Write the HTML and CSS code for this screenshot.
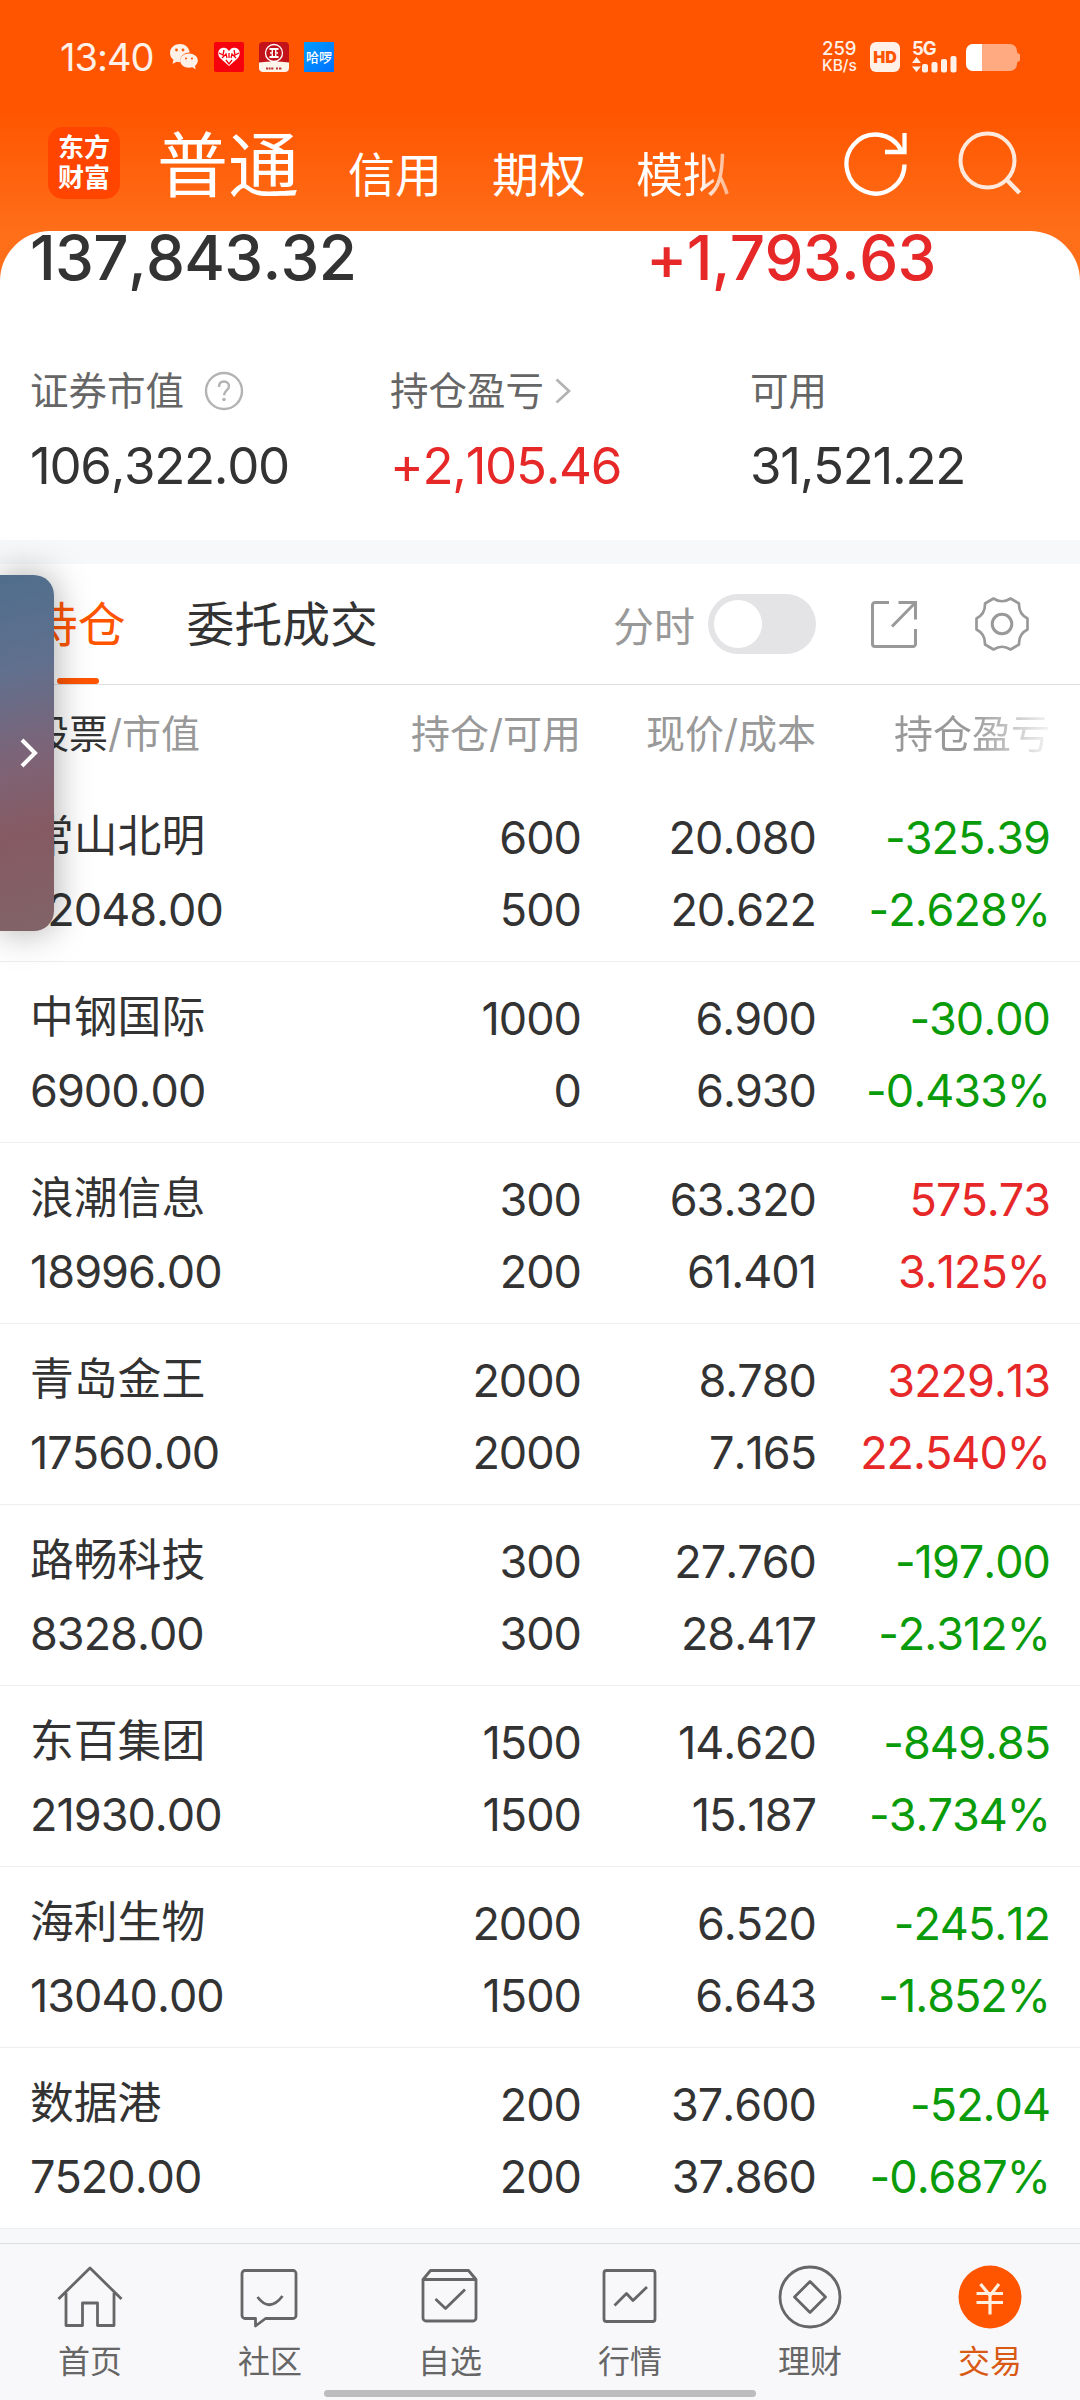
FILE: index.html
```
<!DOCTYPE html>
<html lang="zh-CN">
<head>
  <meta charset="UTF-8" />
  <meta name="viewport" content="width=device-width, initial-scale=1.0" />
  <title>交易 - 持仓</title>
  <link rel="stylesheet" href="styles.css">
</head>
<body>

  <header class="top">
    <div class="status-bar">
      <span class="time">13:40</span>
      <svg class="wechat" width="30" height="28" viewBox="0 0 30 28">
        <path d="M11 1C5 1 1 5 1 10c0 3 1.300 5 3.500 6.800L3.500 21l4-2.200c1.200.3 2.500.4 3.800.4-.8-6 3.200-9.500 9.400-9.800C20 4.500 16 1 11 1z" fill="#fff0e8"/>
        <path d="M20 10.500c-5 0-8.800 3-8.800 7.100s3.800 7.200 8.800 7.200c1.100 0 2.200-.2 3.200-.5l3.500 2-.8-3.300c1.900-1.400 2.900-3.200 2.900-5.400 0-4.100-3.900-7.100-8.800-7.100z" fill="#fff0e8"/>
        <g fill="#ff5a00"><circle cx="7.500" cy="7" r="1.400"/><circle cx="14" cy="7" r="1.400"/><circle cx="17" cy="15.500" r="1.100"/><circle cx="23" cy="15.500" r="1.100"/></g>
      </svg>
      <svg class="app" width="30" height="30" viewBox="0 0 30 30">
        <rect width="30" height="30" rx="2" fill="#f5000c"/>
        <path d="M15 24L6 16c-3-4-2-9 2-10 3-1 5 0 7 3 2-3 4-4 7-3 4 1 5 6 2 10z" fill="#fff"/>
        <path d="M5 11l4 2 1-5M8 16l4-4 1 4M25 11l-4 2-1-5M22 16l-4-4-1 4M15 11v5M12 18l3 4 3-4" fill="none" stroke="#f5000c" stroke-width="1.300"/>
      </svg>
      <svg class="app" width="30" height="30" viewBox="0 0 30 30">
        <rect width="30" height="30" rx="4" fill="#c3121a"/>
        <path d="M0 20.500q15-2 30 0V26a4 4 0 0 1-4 4H4a4 4 0 0 1-4-4z" fill="#fff4ea"/>
        <g fill="none" stroke="#fff"><circle cx="15" cy="11" r="8.500" stroke-width="1.300"/><path d="M10.500 7h9M10.500 15h9" stroke-width="1.800"/><path d="M13.300 7.500v3.500h-2.300M16.700 7.500v3.500h2.300M13.300 15v-3M16.700 15v-3" stroke-width="1.400"/></g>
        <path d="M7 26.500h8M17 26.500h2M20 26.500h3" stroke="#b33" stroke-width="2" stroke-dasharray="2 .6"/>
      </svg>
      <span class="hello">哈啰</span>
      <div class="status-right">
        <div class="speed"><b>259</b><span>KB/s</span></div>
        <span class="hd">HD</span>
        <svg class="signal" width="46" height="34" viewBox="0 -3 46 34">
          <text x="0" y="13" class="g5">5G</text>
          <g fill="#fff0e8"><path d="M0 21l4.500-6L9 21zM0 24.500h9L4.500 30z"/><rect x="10" y="22" width="6" height="8.500" rx="2"/><rect x="19.500" y="20" width="6" height="10.500" rx="2"/><rect x="29" y="17" width="6" height="13.500" rx="2"/><rect x="38.500" y="14" width="6" height="16.500" rx="2"/></g>
        </svg>
        <svg class="battery" width="55" height="27" viewBox="0 0 55 27">
          <path d="M7 0h37a7 7 0 0 1 7 7v1.500l3 2v6l-3 2V20a7 7 0 0 1-7 7H7a7 7 0 0 1-7-7V7a7 7 0 0 1 7-7z" fill="#ffaa80"/>
          <path d="M7 0h9v27H7a7 7 0 0 1-7-7V7a7 7 0 0 1 7-7z" fill="#fff"/>
        </svg>
      </div>
    </div>

    <nav class="account-nav">
      <div class="logo"><span>东方</span><span>财富</span></div>
      <a class="account active">普通</a>
      <a class="account">信用</a>
      <a class="account">期权</a>
      <a class="account fade">模拟</a>
      <svg class="refresh" width="64" height="66" viewBox="0 0 64 66">
        <path d="M60.500 33.500A29 29.500 0 1 1 57 19M60.500 2v19H41" fill="none" stroke="#fff" stroke-width="4.300"/>
      </svg>
      <svg class="search" width="64" height="66" viewBox="0 0 64 66">
        <circle cx="29.500" cy="29.500" r="27" fill="none" stroke="#ffe9dc" stroke-width="4"/>
        <path d="M48.500 48.500L61.500 62" stroke="#ffe9dc" stroke-width="4.500"/>
      </svg>
    </nav>
  </header>

  <main class="sheet">
    <section class="summary">
      <div class="totals">
        <span class="total">137,843.32</span>
        <span class="total up">+1,793.63</span>
      </div>
      <div class="stats">
        <div class="stat">
          <div class="label"><span>证券市值</span>
            <svg class="help" width="40" height="40" viewBox="0 0 40 40">
              <circle cx="20" cy="20" r="18" fill="none" stroke="#b3b3b3" stroke-width="2.400"/>
              <path d="M15 16c0-3.600 2-5.500 5-5.500s5 1.900 5 4.700c0 4-5 4.300-5 9" fill="none" stroke="#b3b3b3" stroke-width="2.400"/>
              <circle cx="20" cy="28.500" r="1.800" fill="#b3b3b3"/>
            </svg>
          </div>
          <div class="value">106,322.00</div>
        </div>
        <div class="stat">
          <div class="label"><span>持仓盈亏</span>
            <svg class="more" width="16" height="26" viewBox="0 0 16 26"><path d="M1.500 1.500L14 13 1.500 24.500" fill="none" stroke="#b3b3b3" stroke-width="2.700"/></svg>
          </div>
          <div class="value up">+2,105.46</div>
        </div>
        <div class="stat">
          <div class="label"><span>可用</span></div>
          <div class="value">31,521.22</div>
        </div>
      </div>
    </section>

    <section class="tabs">
      <a class="tab active">持仓</a>
      <a class="tab">委托成交</a>
      <span class="minute">分时</span>
      <span class="switch"></span>
      <svg class="export" width="46" height="47" viewBox="0 0 46 47">
        <path d="M18 1.500H4A2.500 2.500 0 0 0 1.500 4v39A2.500 2.500 0 0 0 4 45.500h38a2.500 2.500 0 0 0 2.500-2.500V28M27.500 1.500h17v17M44 2L21 25.500" fill="none" stroke="#999" stroke-width="3"/>
      </svg>
      <svg class="gear" width="54" height="54" viewBox="0 0 54 54">
        <path d="M18.500 1.500Q27 7 35.500 1.500L44 6.500Q43.500 17 52.500 21.500V32.500Q43.500 37 44 47.500L35.500 52.500Q27 47 18.500 52.500L10 47.500Q10.500 37 1.500 32.500V21.500Q10.500 17 10 6.500Z" fill="none" stroke="#999" stroke-width="2.700" stroke-linejoin="round"/>
        <circle cx="27" cy="27" r="9.800" fill="none" stroke="#999" stroke-width="3"/>
      </svg>
    </section>

    <section class="positions">
      <div class="grid head">
        <span><em>股票</em>/市值</span>
        <span>持仓/可用</span>
        <span>现价/成本</span>
        <span><i class="fade-out">持仓盈亏</i></span>
      </div>
      <div class="grid row">
        <b>常山北明</b><span>600</span><span>20.080</span><span class="down">-325.39</span>
        <span>12048.00</span><span>500</span><span>20.622</span><span class="down">-2.628%</span>
      </div>
      <div class="grid row">
        <b>中钢国际</b><span>1000</span><span>6.900</span><span class="down">-30.00</span>
        <span>6900.00</span><span>0</span><span>6.930</span><span class="down">-0.433%</span>
      </div>
      <div class="grid row">
        <b>浪潮信息</b><span>300</span><span>63.320</span><span class="up">575.73</span>
        <span>18996.00</span><span>200</span><span>61.401</span><span class="up">3.125%</span>
      </div>
      <div class="grid row">
        <b>青岛金王</b><span>2000</span><span>8.780</span><span class="up">3229.13</span>
        <span>17560.00</span><span>2000</span><span>7.165</span><span class="up">22.540%</span>
      </div>
      <div class="grid row">
        <b>路畅科技</b><span>300</span><span>27.760</span><span class="down">-197.00</span>
        <span>8328.00</span><span>300</span><span>28.417</span><span class="down">-2.312%</span>
      </div>
      <div class="grid row">
        <b>东百集团</b><span>1500</span><span>14.620</span><span class="down">-849.85</span>
        <span>21930.00</span><span>1500</span><span>15.187</span><span class="down">-3.734%</span>
      </div>
      <div class="grid row">
        <b>海利生物</b><span>2000</span><span>6.520</span><span class="down">-245.12</span>
        <span>13040.00</span><span>1500</span><span>6.643</span><span class="down">-1.852%</span>
      </div>
      <div class="grid row">
        <b>数据港</b><span>200</span><span>37.600</span><span class="down">-52.04</span>
        <span>7520.00</span><span>200</span><span>37.860</span><span class="down">-0.687%</span>
      </div>
    </section>
  </main>

  <footer class="tabbar">
    <a class="item">
      <svg width="66" height="66" viewBox="0 0 66 66"><path d="M1.500 35L33 4l31.500 31M9 29v32.500h16.500V39h15v22.500H57V29"/></svg>
      首页
    </a>
    <a class="item">
      <svg width="66" height="66" viewBox="0 0 66 66"><path d="M8 6.500h48a3 3 0 0 1 3 3v42a3 3 0 0 1-3 3H28.500L18.500 62v-7.500H8a3 3 0 0 1-3-3v-42a3 3 0 0 1 3-3zM20.500 33q12 16 25-1"/></svg>
      社区
    </a>
    <a class="item">
      <svg width="66" height="66" viewBox="0 0 66 66"><path d="M6 15.500l7.500-9h38l7.500 9v38.500a3 3 0 0 1-3 3H9a3 3 0 0 1-3-3zM6 15.500h53M18.500 35l10 9.500L48 25.500"/></svg>
      自选
    </a>
    <a class="item">
      <svg width="66" height="66" viewBox="0 0 66 66"><rect x="7" y="6.500" width="51" height="51" rx="2.500"/><path d="M17.500 41.500L29.500 29.500l6.500 7L50 23"/></svg>
      行情
    </a>
    <a class="item">
      <svg width="66" height="66" viewBox="0 0 66 66"><circle cx="33" cy="33" r="30"/><path d="M33 17.500L48.500 33 33 48.500 17.500 33z"/></svg>
      理财
    </a>
    <a class="item active">
      <svg width="66" height="66" viewBox="0 0 66 66"><circle cx="33" cy="33" r="31.500" class="disc"/><path d="M23.500 20L33 31.500 42 20M19.500 29.500h26.500M19.500 38.500h26.500M33 30v20.500" class="yen"/></svg>
      交易
    </a>
  </footer>
  <div class="home-bar"></div>

  <!-- Floating side panel handle -->
  <div class="side-handle">
    <svg width="18" height="30" viewBox="0 0 18 30"><path d="M2 2l13 13L2 28" fill="none" stroke="#fff" stroke-width="4"/></svg>
  </div>

</body>
</html>
```
FILE: styles.css
```
* {
  box-sizing: border-box;
  margin: 0;
  padding: 0;
}

body {
  width: 1080px;
  height: 2400px;
  overflow: hidden;
  position: relative;
  font-family: Inter, "Noto Sans CJK SC", sans-serif;
  font-kerning: none;
  color: #333;
  background: #f7f8fa;
}

svg {
  display: block;
  flex: none;
}

/* Header */
.top {
  height: 290px;
  background: linear-gradient(#ff5500 0, #ff5500 110px, #ff6e19 231px, #ff6e19);
}

.status-bar {
  height: 114px;
  padding: 0 59px 0 60px;
  display: flex;
  align-items: center;
  color: #fff0e8;
}

.time {
  width: 109px;
  font-size: 38px;
  letter-spacing: -1px;
}

.wechat {
  margin-right: 15px;
}

.app {
  margin-right: 15px;
}

.hello {
  width: 30px;
  height: 30px;
  line-height: 30px;
  font-size: 13px;
  font-weight: 500;
  text-align: center;
  color: #fff;
  background: linear-gradient(135deg, #009dff, #0070ff);
}

.status-right {
  margin-left: auto;
  display: flex;
  align-items: center;
}

.speed {
  width: 48px;
  display: flex;
  flex-direction: column;
  line-height: 17px;
}

.speed b {
  font-size: 18.5px;
  font-weight: 500;
}

.speed span {
  font-size: 15.5px;
  font-weight: 500;
}

.hd {
  width: 30px;
  height: 30px;
  margin-right: 12px;
  border-radius: 6px;
  background: #fff0e8;
  color: #ff5500;
  font-size: 16px;
  font-weight: 900;
  line-height: 30px;
  text-align: center;
}

.g5 {
  font-size: 18.5px;
  font-weight: 700;
  letter-spacing: -1px;
  fill: #fff0e8;
}

.signal {
  margin: -3px 8px 0 0;
}

.account-nav {
  height: 117px;
  padding: 0 58px 0 48px;
  display: flex;
  align-items: flex-end;
  color: #fff;
}

.logo {
  width: 72px;
  height: 72px;
  margin: 0 37px 32px 0;
  padding-top: 6px;
  border-radius: 15px;
  background: #ff4500;
  font-size: 26px;
  font-weight: 700;
  line-height: 30px;
  text-align: center;
}

.logo span {
  display: block;
}

.account {
  width: 94px;
  margin-right: 50px;
  font-size: 47px;
  line-height: 60px;
  padding-bottom: 26px;
}

.account.active {
  width: 142px;
  margin-right: 49px;
  font-size: 71px;
  line-height: 80px;
}

.account.fade {
  background: linear-gradient(90deg, #fff 66%, rgba(255, 255, 255, .5));
  -webkit-background-clip: text;
  color: transparent;
}

.refresh {
  margin: 0 0 34px auto;
}

.search {
  margin: 0 0 34px 50px;
}

/* Account summary */
.sheet {
  margin-top: -59px;
  border-radius: 50px 50px 0 0;
  background: #fff;
}

.summary {
  height: 309px;
  padding: 0 30px;
}

.totals {
  display: grid;
  grid-template-columns: 616px auto;
  height: 130px;
}

.total {
  font-size: 62px;
  font-weight: 500;
  line-height: 54px;
  letter-spacing: -.7px;
}

.stats {
  display: grid;
  grid-template-columns: 360px 360px auto;
}

.label {
  display: flex;
  align-items: center;
  height: 60px;
  font-size: 38.5px;
  color: #666;
}

.label span {
  margin-top: -6px;
}

.help {
  margin-left: 20px;
}

.more {
  margin-left: 11px;
}

.value {
  font-size: 51px;
  line-height: 89px;
  letter-spacing: -1.3px;
}

.up {
  color: #e62828;
}

.down {
  color: #0a9b0a;
}

/* Tabs */
.tabs {
  height: 145px;
  padding: 0 51px 0 30px;
  display: flex;
  align-items: center;
  border-top: 24px solid #f7f8fa;
  border-bottom: 1px solid #dedede;
}

.tab {
  height: 120px;
  margin-right: 61px;
  font-size: 47.8px;
  line-height: 123px;
}

.tab.active {
  color: #f50;
}

.tab.active::after {
  content: "";
  display: block;
  width: 42px;
  height: 6px;
  margin: -9px auto 0;
  border-radius: 3px;
  background: #f50;
}

.minute {
  margin-left: auto;
  font-size: 41px;
  color: #999;
}

.switch {
  width: 108px;
  height: 60px;
  margin: 0 55px 0 13px;
  padding: 6px;
  border-radius: 30px;
  background: #e4e4e6;
}

.switch::before {
  content: "";
  display: block;
  width: 48px;
  height: 48px;
  border-radius: 50%;
  background: #fff;
}

.export {
  margin-right: 58px;
}

/* Positions */
.grid {
  display: grid;
  grid-template-columns: 301px 250px 235px 234px;
  align-content: start;
  padding: 0 30px;
  text-align: right;
  white-space: nowrap;
}

.grid > :nth-child(4n + 1) {
  text-align: left;
}

.head {
  height: 96px;
  font-size: 39px;
  line-height: 98px;
  color: #999;
}

.head em {
  font-style: normal;
  color: #333;
}

.fade-out {
  display: inline-block;
  font-style: normal;
  background: linear-gradient(90deg, #999 50%, #f4f4f4);
  -webkit-background-clip: text;
  color: transparent;
}

.row {
  height: 181px;
  padding-top: 21px;
  font-size: 45px;
  line-height: 72px;
  letter-spacing: -1px;
  border-bottom: 1px solid #eee;
}

.row b {
  font-size: 43.8px;
  font-weight: 400;
  line-height: 70px;
  letter-spacing: 0;
}

/* Bottom navigation */
.tabbar {
  height: 157px;
  margin-top: 14px;
  display: grid;
  grid-template-columns: repeat(6, 1fr);
  border-top: 1px solid #dfdfdf;
  background: #f8f8fa;
}

.item {
  padding-top: 20px;
  display: flex;
  flex-direction: column;
  align-items: center;
  font-size: 32px;
  line-height: 63px;
  color: #666;
}

.item svg {
  fill: none;
  stroke: #666;
  stroke-width: 2.8;
  stroke-linejoin: round;
}

.item.active {
  color: #d95a14;
}

.item .disc {
  fill: #f50;
  stroke: none;
}

.item .yen {
  stroke: #fff0e0;
  stroke-width: 3.2;
}

.home-bar {
  position: absolute;
  left: 324px;
  bottom: 3px;
  width: 432px;
  height: 7px;
  border-radius: 4px;
  background: #bcbcbc;
}

.side-handle {
  position: absolute;
  left: 0;
  top: 575px;
  width: 54px;
  height: 356px;
  padding-left: 20px;
  display: flex;
  align-items: center;
  border-radius: 0 20px 20px 0;
  background: linear-gradient(165deg, #4f6e8c 0, #60708e 26%, #7c6478 50%, #865a62 72%, #806468 100%);
  box-shadow: 0 0 36px rgba(0, 0, 0, .35);
}
```
